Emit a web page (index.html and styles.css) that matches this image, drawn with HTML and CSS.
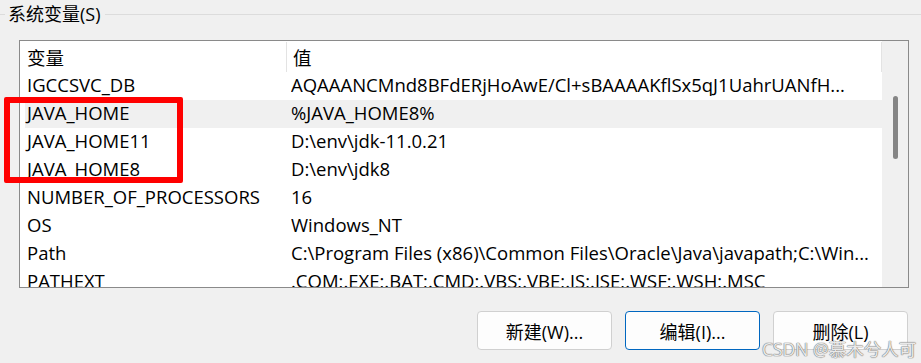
FILE: index.html
```html
<!DOCTYPE html>
<html lang="zh-CN">
<head>
    <meta charset="UTF-8">
    <title>系统变量</title>
    <link rel="stylesheet" href="styles.css">
</head>
<body>
<div class="panel">
    <!-- 分组标题 -->
    <div class="group-title">
        <span class="rule short"></span>
        <span class="label">系统变量(S)</span>
        <span class="rule"></span>
    </div>

    <!-- 变量列表 -->
    <div class="listbox">
        <div class="list-body">
            <div class="row head">
                <div class="cell name">变量</div>
                <div class="cell value">值</div>
            </div>
            <div class="row"><div class="cell name">IGCCSVC_DB</div><div class="cell value">AQAAANCMnd8BFdERjHoAwE/Cl+sBAAAAKflSx5qJ1UahrUANfH...</div></div>
            <div class="row hover"><div class="cell name">JAVA_HOME</div><div class="cell value">%JAVA_HOME8%</div></div>
            <div class="row"><div class="cell name">JAVA_HOME11</div><div class="cell value">D:\env\jdk-11.0.21</div></div>
            <div class="row"><div class="cell name">JAVA_HOME8</div><div class="cell value">D:\env\jdk8</div></div>
            <div class="row"><div class="cell name">NUMBER_OF_PROCESSORS</div><div class="cell value">16</div></div>
            <div class="row"><div class="cell name">OS</div><div class="cell value">Windows_NT</div></div>
            <div class="row"><div class="cell name">Path</div><div class="cell value">C:\Program Files (x86)\Common Files\Oracle\Java\javapath;C:\Win...</div></div>
            <div class="row"><div class="cell name">PATHEXT</div><div class="cell value">.COM;.EXE;.BAT;.CMD;.VBS;.VBE;.JS;.JSE;.WSF;.WSH;.MSC</div></div>
        </div>
        <div class="scrollbar"><div class="thumb"></div></div>
    </div>

    <!-- 按钮 -->
    <div class="buttons">
        <button class="btn">新建(W)...</button>
        <button class="btn focus">编辑(I)...</button>
        <button class="btn">删除(L)</button>
    </div>

    <div class="mark"></div>
    <div class="watermark">CSDN @慕木兮人可</div>
</div>
</body>
</html>
```

FILE: styles.css
```css
body { margin: 0; background: #f0f0f0; font-family: "Open Sans", "Noto Sans CJK SC", sans-serif; color: #000; }
.panel { position: relative; width: 921px; height: 363px; overflow: hidden; }

.group-title { display: flex; align-items: center; height: 26px; padding-top: 1px; }
.group-title .rule { flex: 1; height: 1px; background: #dcdcdc; margin-left: 4px; }
.group-title .rule.short { flex: 0 0 5px; margin: 0 3px 0 0; }
.group-title .label { font-size: 18px; line-height: 24px; }

.listbox { display: flex; margin: 13px 0 0 19px; width: 888px; height: 246px; border: 1px solid #8a8a8a; background: #fff; }
.list-body { flex: 1; padding-left: 5px; overflow: hidden; }
.row { display: flex; height: 28px; line-height: 25px; font-size: 18.5px; white-space: nowrap; }
.row.head { height: 31px; line-height: 32px; }
.row.hover { background: #f0f0f0; }
.cell.name { width: 264px; padding-left: 2px; }
.cell.value { flex: 1; overflow: hidden; }
.row.head .cell.name { width: 259px; border-right: 1px solid #e3e3e3; margin-top: 1px; }
.row.head .cell.value { padding-left: 6px; border-right: 1px solid #e3e3e3; margin-top: 1px; }

.scrollbar { width: 26px; background: #f0f0f0; display: flex; justify-content: center; }
.thumb { width: 5px; height: 63px; margin-top: 55px; background: #858585; border-radius: 3px; }

.buttons { display: flex; justify-content: flex-end; gap: 13px; margin: 23px 13px 0 0; }
.btn { width: 135px; height: 39px; background: #fdfdfd; border: 1px solid #d0d0d0; border-radius: 4px; font-family: inherit; font-size: 18px; color: #000; }
.btn.focus { border-color: #0067c0; }

.mark { position: absolute; left: 4px; top: 97px; width: 167px; height: 74px; border: 6px solid #ff0000; border-radius: 2px; }
.watermark { position: absolute; left: 762px; top: 336px; font-size: 17.5px; white-space: nowrap; color: rgba(255,255,255,0.85); text-shadow: 0 0 1px #777, 0 0 1px #777, 0 0 1px #999; }
```
